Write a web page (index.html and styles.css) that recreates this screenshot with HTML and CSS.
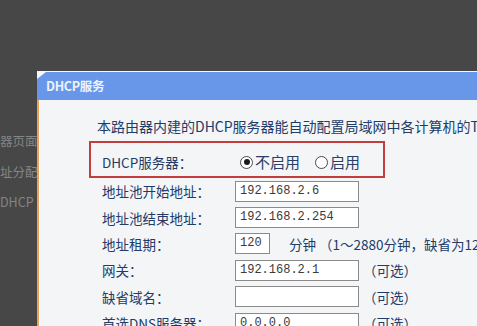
FILE: index.html
```html
<!DOCTYPE html>
<html lang="zh-CN">
<head>
    <meta charset="UTF-8">
    <title>DHCP服务</title>
    <link rel="stylesheet" href="styles.css">
</head>
<body>
    <!-- 背景页面的残留文字 -->
    <div class="bg-side">
        <div>器页面</div>
        <div>址分配</div>
        <div>DHCP</div>
    </div>

    <!-- DHCP 窗口 -->
    <div class="dialog">
        <div class="dialog-title">DHCP服务</div>
        <div class="dialog-body">
            <div class="intro">本路由器内建的DHCP服务器能自动配置局域网中各计算机的TCP/IP协议。</div>

            <div class="server-box">
                <span class="label">DHCP服务器：</span>
                <span class="radio checked"></span><span class="radio-text">不启用</span>
                <span class="radio"></span><span class="radio-text">启用</span>
            </div>

            <div class="row">
                <span class="label">地址池开始地址：</span>
                <span class="input">192.168.2.6</span>
            </div>
            <div class="row">
                <span class="label">地址池结束地址：</span>
                <span class="input">192.168.2.254</span>
            </div>
            <div class="row">
                <span class="label">地址租期：</span>
                <span class="input short">120</span>
                <span class="unit">分钟 （1～2880分钟，缺省为120分钟）</span>
            </div>
            <div class="row">
                <span class="label">网关：</span>
                <span class="input">192.168.2.1</span>
                <span class="hint">（可选）</span>
            </div>
            <div class="row">
                <span class="label">缺省域名：</span>
                <span class="input"></span>
                <span class="hint">（可选）</span>
            </div>
            <div class="row">
                <span class="label">首选DNS服务器：</span>
                <span class="input">0.0.0.0</span>
                <span class="hint">（可选）</span>
            </div>
        </div>
    </div>
</body>
</html>
```

FILE: styles.css
```css
/* 全局样式 */
body, html {
    margin: 0;
    padding: 0;
    height: 100%;
    overflow: hidden;
    background: #474747;
    font-family: 'Noto Sans CJK SC', 'Noto Sans', sans-serif;
}

body {
    display: flex;
}

/* 左侧背景文字 */
.bg-side {
    width: 37px;
    flex: none;
    overflow: hidden;
    white-space: nowrap;
    padding-top: 126px;
    color: #858585;
    font-size: 12.5px;
    line-height: 30.5px;
}

/* 窗口 */
.dialog {
    flex: 1;
    min-width: 0;
    margin-top: 71px;
    display: flex;
    flex-direction: column;
    overflow: hidden;
}

.dialog-title {
    position: relative;
    height: 28px;
    border-top: 1px solid #f4f7fc;
    background: #6897ea;
    color: #eef3fb;
    font-size: 12.5px;
    line-height: 28px;
    padding-left: 9px;
    font-weight: bold;
    letter-spacing: -0.3px;
}

/* 左上角白色斜角 */
.dialog-title::before {
    content: '';
    position: absolute;
    top: 0;
    left: 0;
    border-top: 7px solid #f4f7fc;
    border-right: 9px solid transparent;
}

.dialog-body {
    flex: 1;
    background: #f3f5f7;
    border-left: 2px solid #e9a15c;
    box-shadow: inset 1px 0 0 #ffffff;
    padding: 18px 0 0 50px;
    color: #223b67;
    font-size: 13.5px;
    white-space: nowrap;
}

.intro {
    font-size: 14px;
    line-height: 16px;
    padding-left: 8px;
}

/* 红框 */
.server-box {
    display: flex;
    align-items: center;
    width: 270px;
    margin-top: 7px;
    border: 2px solid #c43d3d;
    padding: 11px 11px 6px;
    line-height: 16px;
}

.label {
    width: 133px;
    flex: none;
}

.radio {
    flex: none;
    width: 13px;
    height: 13px;
    border: 1px solid #4b4b4b;
    border-radius: 50%;
    background: #ffffff;
    box-sizing: border-box;
    margin: 0 2px 0 5px;
    position: relative;
}

.radio.checked::after {
    content: '';
    position: absolute;
    top: 2.5px;
    left: 2.5px;
    width: 6px;
    height: 6px;
    border-radius: 50%;
    background: #1a1a1a;
}

.radio-text {
    color: #2a3f66;
    font-size: 15px;
    margin-right: 10px;
}

/* 表单行 */
.row {
    display: flex;
    align-items: center;
    height: 26.4px;
    padding-left: 13px;
}

.input {
    flex: none;
    width: 124px;
    height: 21px;
    box-sizing: border-box;
    border: 1px solid #8a8a8a;
    background: #ffffff;
    padding-left: 4px;
    color: #3a3a3a;
    font-family: 'Liberation Mono', monospace;
    font-size: 12px;
    line-height: 19px;
}

.input.short {
    width: 35px;
}

.unit {
    margin-left: 19px;
}

.hint {
    margin-left: 4px;
}
```
